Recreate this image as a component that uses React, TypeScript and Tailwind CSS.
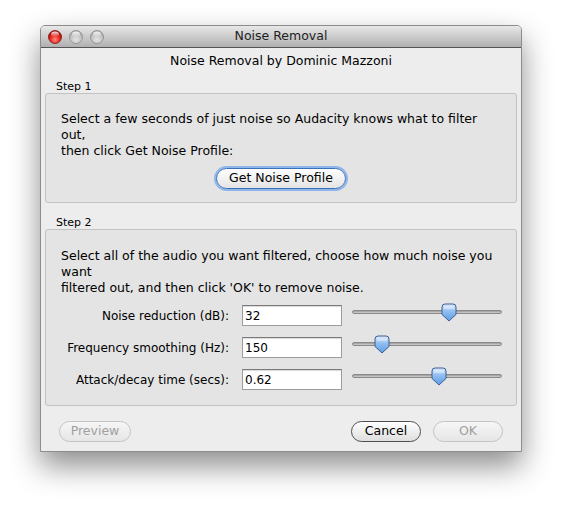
import React from "react";

const font = { fontFamily: '"Lucida Grande", "DejaVu Sans", sans-serif' };

function Light({ color }: { color: "red" | "gray" }) {
  const id = color === "red" ? "gr" : "gg";
  return (
    <svg width="14" height="14" viewBox="0 0 14 14">
      <defs>
        <radialGradient id={id} cx="50%" cy="70%" r="60%">
          {color === "red" ? (
            <>
              <stop offset="0%" stopColor="#ff8a80" />
              <stop offset="60%" stopColor="#e8261e" />
              <stop offset="100%" stopColor="#a80c08" />
            </>
          ) : (
            <>
              <stop offset="0%" stopColor="#e4e4e4" />
              <stop offset="70%" stopColor="#c4c4c4" />
              <stop offset="100%" stopColor="#a8a8a8" />
            </>
          )}
        </radialGradient>
        <linearGradient id={id + "h"} x1="0" y1="0" x2="0" y2="1">
          <stop offset="0%" stopColor="#fff" stopOpacity="0.9" />
          <stop offset="100%" stopColor="#fff" stopOpacity="0" />
        </linearGradient>
      </defs>
      <circle cx="7" cy="7" r="6.5" fill={`url(#${id})`} stroke={color === "red" ? "#7a1510" : "#8c8c8c"} strokeWidth="0.8" />
      <ellipse cx="7" cy="4.2" rx="4" ry="2.6" fill={`url(#${id}h)`} />
    </svg>
  );
}

function Thumb() {
  return (
    <svg width="16" height="19" viewBox="0 0 16 19">
      <defs>
        <linearGradient id="tg" x1="0" y1="0" x2="0" y2="1">
          <stop offset="0%" stopColor="#dbe9fb" />
          <stop offset="45%" stopColor="#8fbdf0" />
          <stop offset="100%" stopColor="#5c9de6" />
        </linearGradient>
      </defs>
      <path d="M1,4 Q1,1 4,1 H12 Q15,1 15,4 V11.5 L8,18 L1,11.5 Z" fill="url(#tg)" stroke="#3f5f94" strokeWidth="1" />
      <path d="M3,3 H13 V6 H3 Z" fill="#ffffff" opacity="0.35" />
    </svg>
  );
}

function Slider({ pos }: { pos: number }) {
  return (
    <div className="relative h-[21px] w-[150px]">
      <div className="absolute left-0 right-0 top-[5px] h-[4px] rounded-full border border-[#8a8a8a] bg-gradient-to-b from-[#9a9a9a] to-[#d0d0d0]" />
      <div className="absolute top-[-2px]" style={{ left: pos }}>
        <Thumb />
      </div>
    </div>
  );
}

function Row({ label, value, pos }: { label: string; value: string; pos: number }) {
  return (
    <div className="flex h-[21px] items-center">
      <div className="w-[183px] text-right text-[12px] text-black">{label}</div>
      <div className="ml-[13px] flex h-[21px] w-[100px] items-center border border-[#9c9c9c] border-t-[#7a7a7a] bg-white pl-[2px] text-[12px] text-black shadow-[inset_0_1px_1px_rgba(0,0,0,0.15)]">
        {value}
      </div>
      <div className="ml-[10px]">
        <Slider pos={pos} />
      </div>
    </div>
  );
}

function Btn({ children, w, disabled, focus }: { children: React.ReactNode; w: number; disabled?: boolean; focus?: boolean }) {
  const base = "flex h-[21px] items-center justify-center rounded-full text-[12.5px] ";
  let cls = "";
  if (disabled) cls = "border border-[#c4c4c4] bg-gradient-to-b from-[#f6f6f6] to-[#e6e6e6] text-[#a0a0a0]";
  else if (focus)
    cls = "border border-[#3d6fb8] bg-gradient-to-b from-[#ffffff] to-[#e4e4e4] text-black shadow-[0_0_0_2px_#8eb6ea]";
  else cls = "border border-[#4e4e4e] bg-gradient-to-b from-[#ffffff] to-[#dedede] text-black";
  return (
    <div className={base + cls} style={{ width: w }}>
      {children}
    </div>
  );
}

export default function App() {
  return (
    <div className="min-h-[507px] w-[562px] bg-white pl-[40px] pt-[25px]" style={font}>
      <div className="flex h-[427px] w-[482px] flex-col overflow-hidden rounded-t-[5px] border border-[#8c8c8c] bg-[#ededed] shadow-[0_14px_30px_rgba(0,0,0,0.45)]">
        {/* title bar */}
        <div className="relative flex h-[22px] shrink-0 items-center border-b border-[#555555] bg-gradient-to-b from-[#e8e8e8] to-[#b0b0b0]">
          <div className="flex items-center gap-[7px] pl-[7px]">
            <Light color="red" />
            <Light color="gray" />
            <Light color="gray" />
          </div>
          <div className="absolute inset-0 flex items-center justify-center text-[12.5px] text-[#222]">Noise Removal</div>
        </div>

        <div className="mt-[5px] h-[16px] text-center text-[12.5px] leading-[16px] text-black">
          Noise Removal by Dominic Mazzoni
        </div>

        <div className="ml-[15px] mt-[11px] h-[13px] text-[11px] leading-[13px] text-black">Step 1</div>
        <div className="ml-[4px] flex h-[110px] w-[472px] flex-col rounded-[3px] border border-[#c2c2c2] bg-[#e4e4e4]">
          <div className="pl-[15px] pt-[17px] text-[12.5px] leading-[16px] text-black">
            Select a few seconds of just noise so Audacity knows what to filter
            <br />
            out,
            <br />
            then click Get Noise Profile:
          </div>
          <div className="mt-[9px] flex justify-center">
            <Btn w={130} focus>
              Get Noise Profile
            </Btn>
          </div>
        </div>

        <div className="ml-[15px] mt-[13px] h-[13px] text-[11px] leading-[13px] text-black">Step 2</div>
        <div className="ml-[4px] flex h-[177px] w-[472px] flex-col rounded-[3px] border border-[#c2c2c2] bg-[#e4e4e4]">
          <div className="pl-[15px] pt-[18px] text-[12.5px] leading-[16px] text-black">
            Select all of the audio you want filtered, choose how much noise you
            <br />
            want
            <br />
            filtered out, and then click 'OK' to remove noise.
          </div>
          <div className="mt-[9px] flex flex-col gap-[11px]">
            <Row label="Noise reduction (dB):" value="32" pos={89} />
            <Row label="Frequency smoothing (Hz):" value="150" pos={22} />
            <Row label="Attack/decay time (secs):" value="0.62" pos={79} />
          </div>
        </div>

        <div className="mt-[15px] flex items-center pl-[18px]">
          <Btn w={72} disabled>
            Preview
          </Btn>
          <div className="ml-[220px]">
            <Btn w={70}>Cancel</Btn>
          </div>
          <div className="ml-[12px]">
            <Btn w={70} disabled>
              OK
            </Btn>
          </div>
        </div>
      </div>
    </div>
  );
}
